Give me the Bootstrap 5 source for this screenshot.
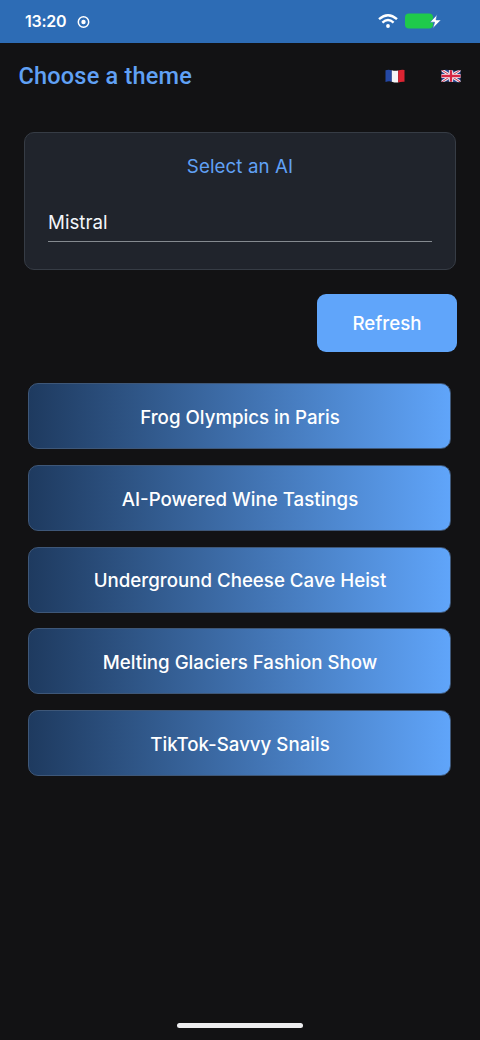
<!DOCTYPE html>
<html lang="en">
<head>
<meta charset="utf-8">
<meta name="viewport" content="width=device-width, initial-scale=1">
<title>Choose a theme</title>
<link href="https://cdn.jsdelivr.net/npm/bootstrap@5.3.0/dist/css/bootstrap.min.css" rel="stylesheet">
<style>
body{background:#121214;font-family:Inter,"Liberation Sans",sans-serif;color:#f3f6fa;height:1040px;overflow:hidden}
.status-bar{height:42.5px;background:#2d6cb5;padding:0 39px 0 25px;color:#fff}
.clock{font:600 16px/42px Inter,sans-serif;letter-spacing:-.25px}
.app-bar{height:67px;padding:0 19px 0 18.5px}
.app-title{font:500 23.5px/28px Roboto,sans-serif;color:#60a1f5;letter-spacing:.2px}
.flag-btn{width:20px;height:20px}
.ai-card{margin:22.5px 24px 0;height:138px;background:#20242c;border:1px solid #363c45;border-radius:10px;padding:21.5px 23px 0;color:inherit}
.ai-label{font-size:18.7px;line-height:24px;color:#60a1f5;letter-spacing:.1px}
.ai-input{margin-top:31px;height:32px;border-bottom:1px solid #858a90;font-size:18.7px;line-height:26px}
.refresh-btn{width:140px;height:58px;margin:24px 23px 0 0;background:#60a5fa;border:0;border-radius:9px;color:#fff;font-size:18.7px;font-weight:500;padding:2px 0 0}
.theme-list{margin:31px 29px 0 28px;gap:15.75px}
.theme-btn{height:66px;border:1px solid #3e5778;border-radius:10px;background:linear-gradient(90deg,#1e3a5f,#60a5fa) border-box;color:#fff;font-size:18.7px;font-weight:500;padding:4px 0 0 1px}
.home-bar{width:126px;height:5px;border-radius:3px;background:#ededef;margin-bottom:12px}
</style>
</head>
<body class="d-flex flex-column">
<div class="status-bar d-flex justify-content-between align-items-center flex-shrink-0">
  <div class="d-flex align-items-center">
    <span class="clock">13:20</span>
    <svg class="ms-2" style="margin-top:1px" width="20" height="14" viewBox="0 0 20 14"><circle cx="9.5" cy="7" r="5.2" fill="none" stroke="#fff" stroke-width="1.5"/><circle cx="9.5" cy="7" r="2.2" fill="#fff"/></svg>
  </div>
  <div class="d-flex align-items-center">
    <svg width="20" height="16" viewBox="0 0 20 16" fill="none" stroke="#fff" stroke-width="2.4"><path d="M1 6.2Q10-1.8 19 6.2M4.4 9.6Q10 4.6 15.6 9.6"/><circle cx="10" cy="13" r="1.9" fill="#fff" stroke="none"/></svg>
    <svg class="ms-1" width="39" height="18" viewBox="0 0 39 18"><rect x="3" y="1.5" width="28" height="15" rx="4" fill="#1fca4b"/><path d="M35.2 2.6L28 10.2h4.6l-1.8 6.2L39 7.9h-5z" fill="#fff" stroke="#2d6cb5" stroke-width=".6"/></svg>
  </div>
</div>
<header class="app-bar d-flex justify-content-between align-items-center flex-shrink-0">
  <h1 class="app-title m-0">Choose a theme</h1>
  <div class="d-flex" style="gap:36px">
    <button class="flag-btn btn p-0 border-0 d-flex" aria-label="French"><svg width="20" height="20" viewBox="0 0 20 20"><path d="M.5 4.2q3-1 6.3 0v11.5q-3-1-6.3.3z" fill="#2448a5"/><path d="M6.8 4.2q3.2 1 6.4.3v12q-3.2.3-6.4-.8z" fill="#f5f5f7"/><path d="M13.2 4.5q3.2-1 6.3-.5v11.8q-3.1-.3-6.3.7z" fill="#dc2432"/></svg></button>
    <button class="flag-btn btn p-0 border-0 d-flex" aria-label="English"><svg width="20" height="20" viewBox="0 0 20 20"><defs><clipPath id="wave"><path d="M.5 4.2q4.8-1 9.5 0t9.5-.2V16q-4.8.6-9.5-.2T.5 16z"/></clipPath></defs><g clip-path="url(#wave)"><path fill="#29478e" d="M0 3h20v14H0z"/><path stroke="#eceaf0" stroke-width="3" d="M0 3.5l20 13M20 3.5l-20 13"/><path stroke="#d33550" stroke-width="1" d="M0 3.5l20 13M20 3.5l-20 13"/><path stroke="#f2edf1" stroke-width="4.2" d="M10 2v16M0 10h20"/><path stroke="#d52643" stroke-width="2.3" d="M10 2v16M0 10h20"/></g></svg></button>
  </div>
</header>
<main>
  <section class="card ai-card">
    <div class="ai-label text-center">Select an AI</div>
    <div class="ai-input">Mistral</div>
  </section>
  <div class="d-flex justify-content-end"><button class="btn refresh-btn">Refresh</button></div>
  <div class="theme-list d-flex flex-column">
    <button class="btn theme-btn">Frog Olympics in Paris</button>
    <button class="btn theme-btn">AI-Powered Wine Tastings</button>
    <button class="btn theme-btn">Underground Cheese Cave Heist</button>
    <button class="btn theme-btn">Melting Glaciers Fashion Show</button>
    <button class="btn theme-btn">TikTok-Savvy Snails</button>
  </div>
</main>
<div class="home-bar mt-auto mx-auto flex-shrink-0"></div>
<script src="https://cdn.jsdelivr.net/npm/bootstrap@5.3.0/dist/js/bootstrap.bundle.min.js"></script>
</body>
</html>
